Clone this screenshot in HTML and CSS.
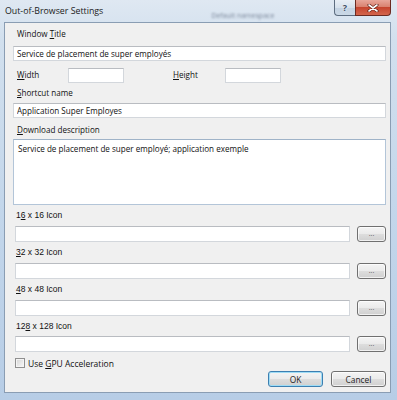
FILE: index.html
```html
<!DOCTYPE html>
<html>
	<head>
		<meta http-equiv="Content-Type" content="text/html; charset=utf-8">
		<title>Out-of-Browser Settings</title>
		<link rel="stylesheet" href="styles.css">
	</head>
	<body>
		<div class="window">
			<div class="titlebar">
				<span class="title">Out-of-Browser Settings</span>
				<span class="ghost">Default namespace</span>
				<div class="caption">
					<span class="cap-btn help">?</span>
					<span class="cap-btn close">
						<svg width="12" height="8" viewBox="0 0 12 8">
							<path d="M2 1 L10 7 M10 1 L2 7" stroke="#5a1a12" stroke-width="3" stroke-linecap="round"/>
							<path d="M2 1 L10 7 M10 1 L2 7" stroke="#fff" stroke-width="1.6" stroke-linecap="round"/>
						</svg>
					</span>
				</div>
			</div>

			<div class="client">
				<div class="label">Window <u>T</u>itle</div>
				<input class="field" type="text" value="Service de placement de super employés">

				<div class="size-row">
					<span class="label"><u>W</u>idth</span>
					<input class="field small" type="text" value="">
					<span class="label second"><u>H</u>eight</span>
					<input class="field small" type="text" value="">
				</div>

				<div class="label gap3"><u>S</u>hortcut name</div>
				<input class="field gap2" type="text" value="Application Super Employes">

				<div class="label gap4"><u>D</u>ownload description</div>
				<textarea class="field area">Service de placement de super employé; application exemple</textarea>

				<div class="label icon-label gap3">1<u>6</u> x 16 Icon</div>
				<div class="file-row">
					<input class="field" type="text" value="">
					<button class="btn browse">...</button>
				</div>

				<div class="label icon-label"><u>3</u>2 x 32 Icon</div>
				<div class="file-row">
					<input class="field" type="text" value="">
					<button class="btn browse">...</button>
				</div>

				<div class="label icon-label"><u>4</u>8 x 48 Icon</div>
				<div class="file-row">
					<input class="field" type="text" value="">
					<button class="btn browse">...</button>
				</div>

				<div class="label icon-label">12<u>8</u> x 128 Icon</div>
				<div class="file-row last">
					<input class="field" type="text" value="">
					<button class="btn browse">...</button>
				</div>

				<label class="check-row">
					<input class="check" type="checkbox">
					<span>Use <u>G</u>PU Acceleration</span>
				</label>

				<div class="actions">
					<button class="btn default">OK</button>
					<button class="btn">Cancel</button>
				</div>
			</div>
		</div>
	</body>
</html>
```

FILE: styles.css
```css
body{
	margin: 0;
	padding: 0;
	overflow: hidden;
	font-family: "Open Sans", "Noto Sans", sans-serif;
	font-size: 8.1px;
	color: #111;
}

.window{
	width: 397px;
	height: 400px;
	box-sizing: border-box;
	padding: 0 6px 7px 4px;
	display: flex;
	flex-direction: column;
	background: linear-gradient(to bottom, #dfe8f2 0, #d2e0ee 40px, #c4d7eb 200px, #b7cde6 400px);
}

/* title bar */
.titlebar{
	height: 22px;
	display: flex;
	align-items: flex-start;
}

.title{
	padding: 5px 0 0 1px;
	font-size: 8.8px;
	color: #1b1b1b;
}

.ghost{
	margin: 11px 0 0 108px;
	font-size: 7px;
	color: rgba(40, 55, 80, 0.55);
	filter: blur(1.3px);
}

.caption{
	margin-left: auto;
	display: flex;
}

.cap-btn{
	height: 16px;
	box-sizing: border-box;
	display: flex;
	align-items: center;
	justify-content: center;
	border: 1px solid #5d6d80;
	border-top: none;
}

.help{
	width: 21px;
	border-radius: 0 0 0 4px;
	border-right: none;
	background: linear-gradient(to bottom, #e8eef5 0, #d6e1ec 50%, #c3d2e2 51%, #cad8e6 100%);
	color: #3e4e62;
	font-weight: bold;
	font-size: 9px;
	text-shadow: 0 0 2px #fff;
}

.close{
	width: 36px;
	border-radius: 0 0 4px 0;
	border-color: #6b2b22;
	background: linear-gradient(to bottom, #e8a69a 0, #d98270 45%, #c6452f 50%, #d3654c 100%);
}

/* client area */
.client{
	flex: 1;
	border: 1px solid #8a9db3;
	background: #f0f0f0;
	padding: 3px 4px 0 8px;
	display: flex;
	flex-direction: column;
}

.label{
	height: 16px;
	line-height: 16px;
	padding-left: 4px;
	white-space: nowrap;
}

.field{
	height: 15px;
	margin: 4px 0 0 0;
	padding: 0 3px;
	box-sizing: border-box;
	border: 1px solid #d3d7dc;
	border-top-color: #b9bcc1;
	background: #fff;
	font-family: inherit;
	font-size: 8.1px;
	color: #111;
	outline: none;
}

.gap2{ margin-top: 2px; }
.gap3{ margin-top: 3px; }
.gap4{ margin-top: 4px; }

.size-row{
	margin-top: 6px;
	height: 15px;
	display: grid;
	grid-template-columns: 55px 56px 101px 56px;
	align-items: center;
}

.size-row .field{
	margin: 0;
	width: 56px;
}

.size-row .second{
	padding-left: 49px;
}

.area{
	height: 66px;
	margin-top: 1px;
	padding: 3px 4px;
	resize: none;
	border-color: #b3c5d8;
	border-top-color: #9fb3c8;
}

.icon-label{
	margin-top: 2px;
	font-family: "Liberation Sans", sans-serif;
	font-size: 8.5px;
	padding-left: 3px;
}

.file-row{
	margin-top: 3px;
	height: 16px;
	display: flex;
	gap: 7px;
	padding-left: 2px;
}

.file-row .field{
	flex: 1;
	height: 16px;
	margin: 0;
}

.file-row.last{
	margin-top: 2px;
}

.btn{
	box-sizing: border-box;
	height: 16px;
	padding: 0;
	border: 1px solid #707070;
	border-radius: 3px;
	background: linear-gradient(to bottom, #f4f4f4 0, #ebebeb 48%, #dddddd 52%, #d0d0d0 100%);
	box-shadow: inset 0 0 0 1px rgba(255, 255, 255, 0.7);
	font-family: inherit;
	font-size: 8.4px;
	color: #222;
}

.browse{
	width: 29px;
	font-size: 7px;
	line-height: 10px;
	color: #555;
}

.check-row{
	margin-top: 5px;
	height: 12px;
	display: flex;
	align-items: center;
	gap: 3px;
	padding-left: 2px;
	font-size: 8.5px;
}

.check{
	appearance: none;
	margin: 0;
	width: 10px;
	height: 10px;
	border: 1px solid #8f8f8f;
	background: linear-gradient(135deg, #d4d4d4 0, #eaeaea 60%, #f8f8f8 100%);
	box-shadow: inset 0 0 0 1px #f4f4f4;
}

.actions{
	margin-top: 2px;
	display: flex;
	justify-content: flex-end;
	gap: 8px;
}

.actions .btn{
	width: 55px;
}

.actions .default{
	border-color: #3c7fb1;
	box-shadow: inset 0 0 0 1px #9fdcf5;
}
```
